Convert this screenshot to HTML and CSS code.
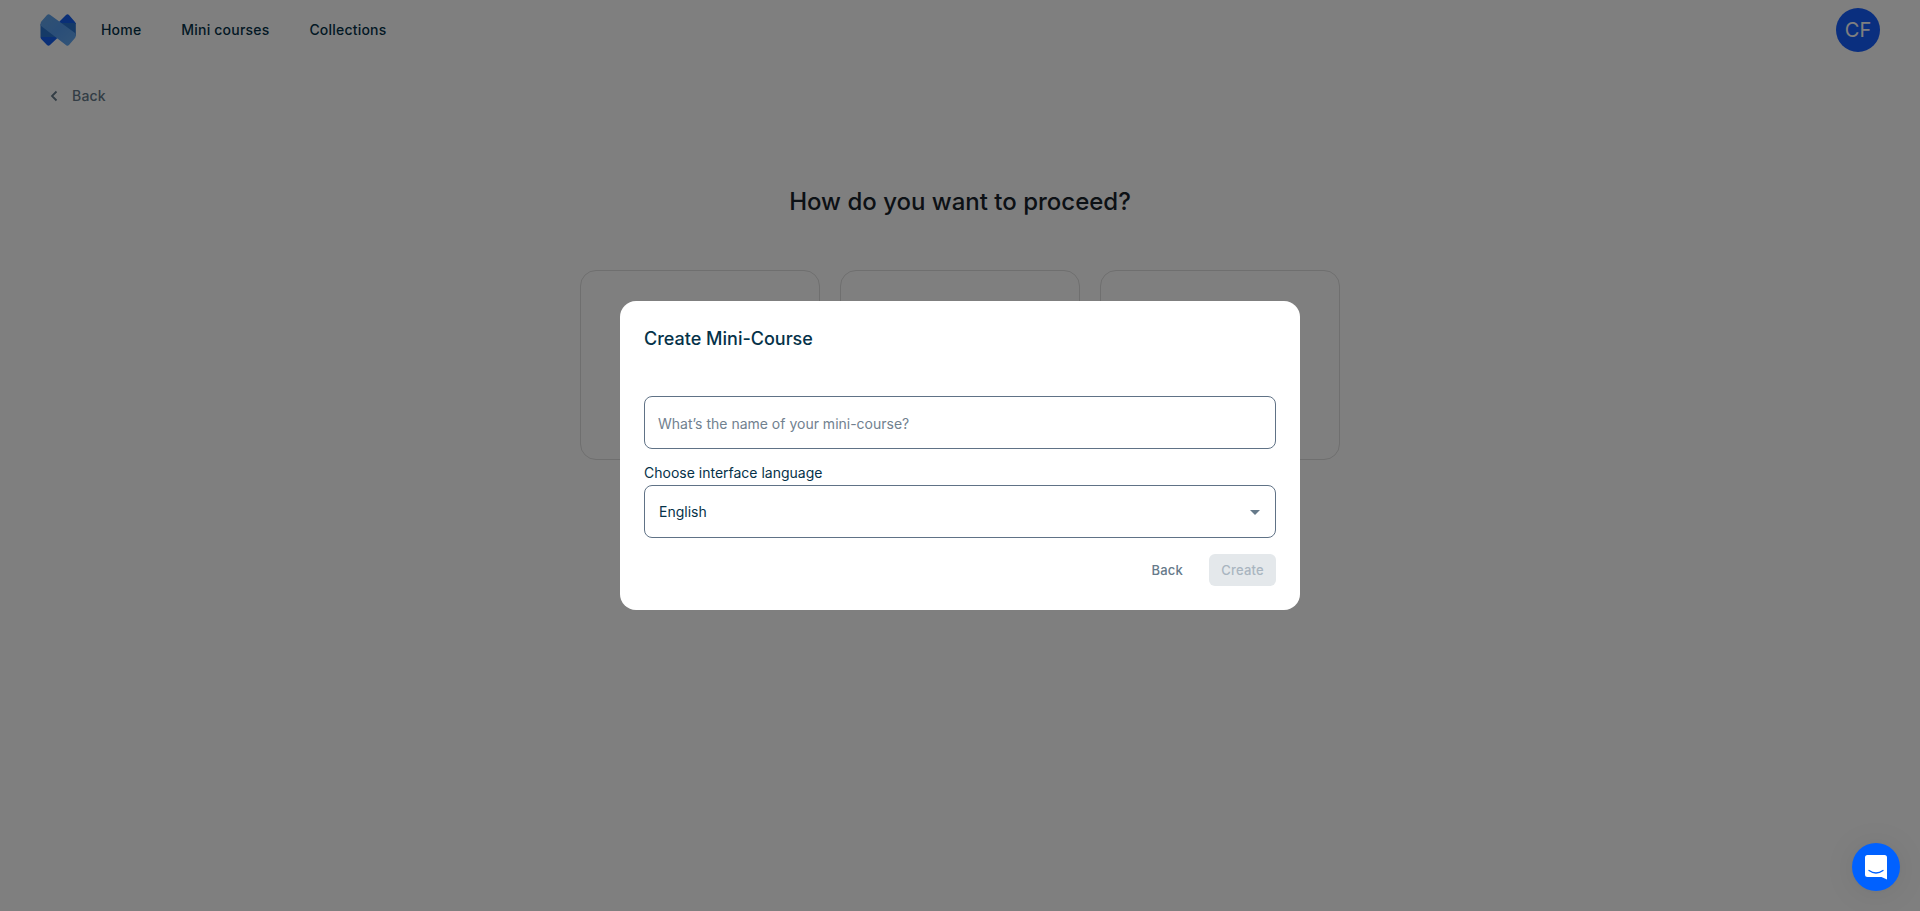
FILE: index.html
```html
<!DOCTYPE html>
<html lang="en">
<head>
<meta charset="utf-8">
<title>Create Mini-Course</title>
<link rel="stylesheet" href="styles.css">
</head>
<body>
<header class="topbar">
  <svg class="logo" width="36" height="32" viewBox="0 0 36 32">
    <defs>
      <linearGradient id="band" x1="0" y1="0" x2="1" y2="1">
        <stop offset="0" stop-color="#64a4e4"/>
        <stop offset=".5" stop-color="#559cf0"/>
        <stop offset="1" stop-color="#66aaf0"/>
      </linearGradient>
    </defs>
    <path d="M.5 23h18L10 31Q8.500 32.500 7 31L1.200 25Q.5 24 .5 23z" fill="#155eef"/>
    <path d="M18 9L26 1q1.500-1.300 3 0l6 7q.8.800.8 2z" fill="#155eef"/>
    <path d="M.5 10v13h18l3.500-4z" fill="#2b74cf"/>
    <path d="M35.800 22V9H18l-4 4z" fill="#2b74cf"/>
    <path d="M.5 11.500V10Q.5 8.500 1.300 7.500L7 1Q8.500-.4 10 .7L35 19Q35.800 20 35.800 21.500T35 24l-6 7q-1.300 1.300-2.800.2z" fill="url(#band)"/>
  </svg>
  <nav class="nav">
    <a class="nav-link">Home</a>
    <a class="nav-link">Mini courses</a>
    <a class="nav-link">Collections</a>
  </nav>
  <div class="avatar">CF</div>
</header>
<main class="page">
  <a class="back-link">
    <svg width="8" height="12" viewBox="0 0 8 12"><path d="M6.500 1.500L2 6l4.500 4.500" fill="none" stroke="currentColor" stroke-width="1.800"/></svg>
    <span>Back</span>
  </a>
  <h1 class="heading">How do you want to proceed?</h1>
  <div class="cards">
    <div class="card"></div>
    <div class="card"></div>
    <div class="card"></div>
  </div>
</main>
<button class="chat" aria-label="Open chat">
  <svg width="22" height="25" viewBox="0 0 22 25">
    <path d="M2.500 0h17Q22 0 22 2.500V24.500L16.500 22h-14Q0 22 0 19.500v-17Q0 0 2.500 0z" fill="#fff"/>
    <path d="M4 15.500q7 5 14 0" fill="none" stroke="#0061ff" stroke-width="1.300" stroke-linecap="round"/>
  </svg>
</button>
<div class="overlay">
  <section class="modal" role="dialog">
    <h2 class="modal-title">Create Mini-Course</h2>
    <div class="field placeholder">What’s the name of your mini-course?</div>
    <div class="label">Choose interface language</div>
    <div class="field select">
      <span>English</span>
      <svg class="caret" width="10" height="5" viewBox="0 0 10 5"><path d="M0 0h10L5 5z" fill="#667a8a"/></svg>
    </div>
    <div class="actions">
      <button class="btn">Back</button>
      <button class="btn btn-disabled">Create</button>
    </div>
  </section>
</div>
</body>
</html>
```
FILE: styles.css
```css
* { box-sizing: border-box; }
body {
  margin: 0;
  height: 911px;
  overflow: hidden;
  background: #fff;
  font-family: Inter, sans-serif;
  color: #053249;
}
button { font-family: inherit; border: 0; }
.topbar {
  display: flex;
  align-items: center;
  height: 60px;
  padding: 0 40px;
}
.logo { display: block; }
.nav {
  display: flex;
  gap: 40px;
  margin-left: 25px;
}
.nav-link {
  font-size: 14px;
  line-height: 20px;
  font-weight: 500;
  letter-spacing: 0.2px;
}
.avatar {
  display: flex;
  align-items: center;
  justify-content: center;
  width: 44px;
  height: 44px;
  margin-left: auto;
  border-radius: 50%;
  background: #155eff;
  color: #fff;
  font-size: 20px;
}
.page {
  display: flex;
  flex-direction: column;
  padding: 25px 50px 0;
}
.back-link {
  display: flex;
  align-items: center;
  gap: 14px;
  height: 21px;
  font-size: 14px;
  line-height: 20px;
  font-weight: 500;
  letter-spacing: 0.2px;
  color: #667a8a;
}
.heading {
  margin: 81px 0 53px;
  font-size: 24px;
  line-height: 30px;
  font-weight: 500;
  text-align: center;
  color: #18222b;
}
.cards {
  display: flex;
  justify-content: center;
  gap: 20px;
}
.card {
  width: 240px;
  height: 190px;
  border: 1px solid #dedede;
  border-radius: 16px;
}
.overlay {
  position: fixed;
  inset: 0;
  display: flex;
  align-items: center;
  justify-content: center;
  background: rgba(0, 0, 0, 0.5);
}
.modal {
  width: 680px;
  height: 309px;
  padding: 24px;
  border-radius: 16px;
  background: #fff;
}
.modal-title {
  margin: 0 0 43px;
  font-size: 18px;
  line-height: 28px;
  font-weight: 500;
}
.field {
  display: flex;
  align-items: center;
  height: 53px;
  padding: 0 14px;
  border: 1px solid #607286;
  border-radius: 8px;
  font-size: 14px;
}
.placeholder {
  padding: 2px 13px 0;
  color: #71818f;
}
.label {
  margin: 13px 0 1px;
  font-size: 14px;
  line-height: 22px;
}
.select {
  justify-content: space-between;
  padding-right: 15px;
}
.caret { margin-top: 2px; }
.actions {
  display: flex;
  justify-content: flex-end;
  gap: 14px;
  margin-top: 16px;
}
.btn {
  height: 32px;
  padding: 0 12px;
  border-radius: 6px;
  background: none;
  color: #667a8a;
  font-size: 13px;
  font-weight: 500;
  letter-spacing: 0.2px;
}
.btn-disabled {
  width: 67px;
  background: #e4e8eb;
  color: #a9b5c0;
}
.chat {
  position: fixed;
  right: 20px;
  bottom: 20px;
  z-index: 2;
  display: flex;
  align-items: center;
  justify-content: center;
  width: 48px;
  height: 48px;
  padding: 0;
  border-radius: 50%;
  background: #0061ff;
  box-shadow: 0 1px 6px rgba(0, 0, 0, 0.03), 0 2px 32px rgba(0, 0, 0, 0.08);
}
```
